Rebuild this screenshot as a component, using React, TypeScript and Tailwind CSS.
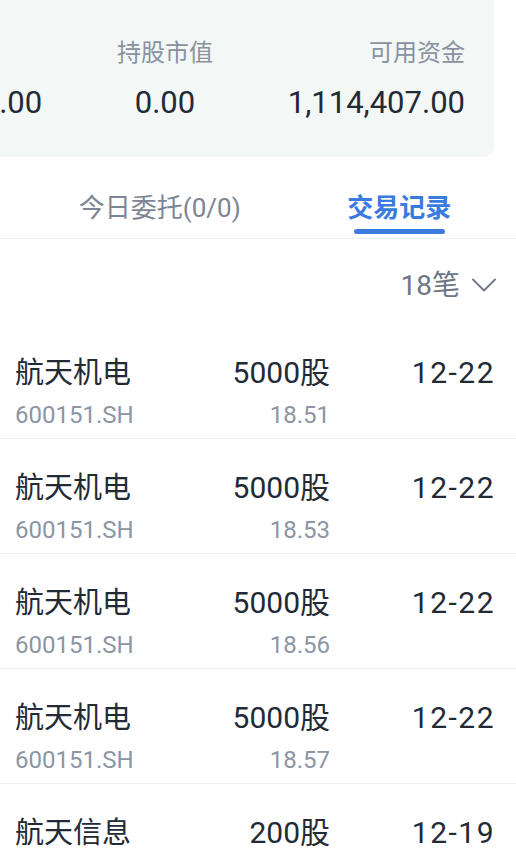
interface TradeRow {
  name: string
  code: string
  qty: string
  price: string
  date: string
}

const ROWS: TradeRow[] = [
  { name: '航天机电', code: '600151.SH', qty: '5000股', price: '18.51', date: '12-22' },
  { name: '航天机电', code: '600151.SH', qty: '5000股', price: '18.53', date: '12-22' },
  { name: '航天机电', code: '600151.SH', qty: '5000股', price: '18.56', date: '12-22' },
  { name: '航天机电', code: '600151.SH', qty: '5000股', price: '18.57', date: '12-22' },
  { name: '航天信息', code: '600271.SH', qty: '200股', price: '8.62', date: '12-19' },
]

function Summary() {
  return (
    <div className="-ml-[165px] w-[659px] rounded-b-[10px] bg-[#f3f7f5] pl-[30px] pr-[29px] pt-[37px] pb-[34px]">
      <div className="grid grid-cols-3">
        <div className="flex flex-col items-start">
          <span className="text-[24px] leading-[32px] text-[#8a92a0]">总资产</span>
          <span className="mt-[14px] text-[31px] leading-[40px] text-[#222a36]">1,114,407.00</span>
        </div>
        <div className="flex flex-col items-center">
          <span className="text-[24px] leading-[32px] text-[#8a92a0]">持股市值</span>
          <span className="mt-[14px] text-[31px] leading-[40px] text-[#222a36]">0.00</span>
        </div>
        <div className="flex flex-col items-end">
          <span className="text-[24px] leading-[32px] text-[#8a92a0]">可用资金</span>
          <span className="mt-[14px] text-[31px] leading-[40px] text-[#222a36]">1,114,407.00</span>
        </div>
      </div>
    </div>
  )
}

function Tabs() {
  return (
    <div className="flex border-b border-[#eef0f3] pl-[43px] pt-[33px] pb-[4px]">
      <div className="flex w-[240px] flex-col items-center">
        <span className="text-[26px] leading-[36px] text-[#7d8594]">今日委托(0/0)</span>
        <span className="mt-[3px] h-[5px]" />
      </div>
      <div className="ml-[6px] flex w-[240px] flex-col items-center">
        <span className="text-[26px] font-bold leading-[36px] text-[#3a7be0]">交易记录</span>
        <span className="mt-[3px] h-[5px] w-[91px] rounded-full bg-[#3a7be0]" />
      </div>
    </div>
  )
}

function Row({ row }: { row: TradeRow }) {
  return (
    <div className="flex h-[115px] border-b border-[#eef0f3] pl-[15px] pr-[23px] pt-[31px]">
      <div className="flex flex-1 flex-col">
        <span className="text-[29px] leading-[36px] text-[#222a36]">{row.name}</span>
        <span className="mt-[9px] text-[24px] leading-[30px] text-[#8c95a4]">{row.code}</span>
      </div>
      <div className="flex w-[150px] flex-col items-end">
        <span className="text-[30px] leading-[36px] text-[#222a36]">{row.qty}</span>
        <span className="mt-[9px] text-[24px] leading-[30px] text-[#8c95a4]">{row.price}</span>
      </div>
      <div className="flex w-[163px] flex-col items-end">
        <span className="-mr-[2px] text-[30px] leading-[36px] tracking-[1.5px] text-[#222a36]">{row.date}</span>
      </div>
    </div>
  )
}

export default function App() {
  return (
    <div className="h-[852px] w-[516px] overflow-hidden bg-white font-['Roboto','Noto_Sans_CJK_SC',sans-serif]">
      <Summary />
      <Tabs />
      <div className="flex h-[85px] items-start justify-end pr-[20px] pt-[29px]">
        <span className="text-[28px] leading-[36px] text-[#6e7685]">18笔</span>
        <svg className="ml-[12px] mt-[10px]" width="24" height="15" viewBox="0 0 24 15" fill="none">
          <path d="M1 1.5 L12 12.5 L23 1.5" stroke="#6e7685" strokeWidth="1.8" strokeLinecap="round" strokeLinejoin="round" />
        </svg>
      </div>
      {ROWS.map((row, i) => (
        <Row key={i} row={row} />
      ))}
    </div>
  )
}
